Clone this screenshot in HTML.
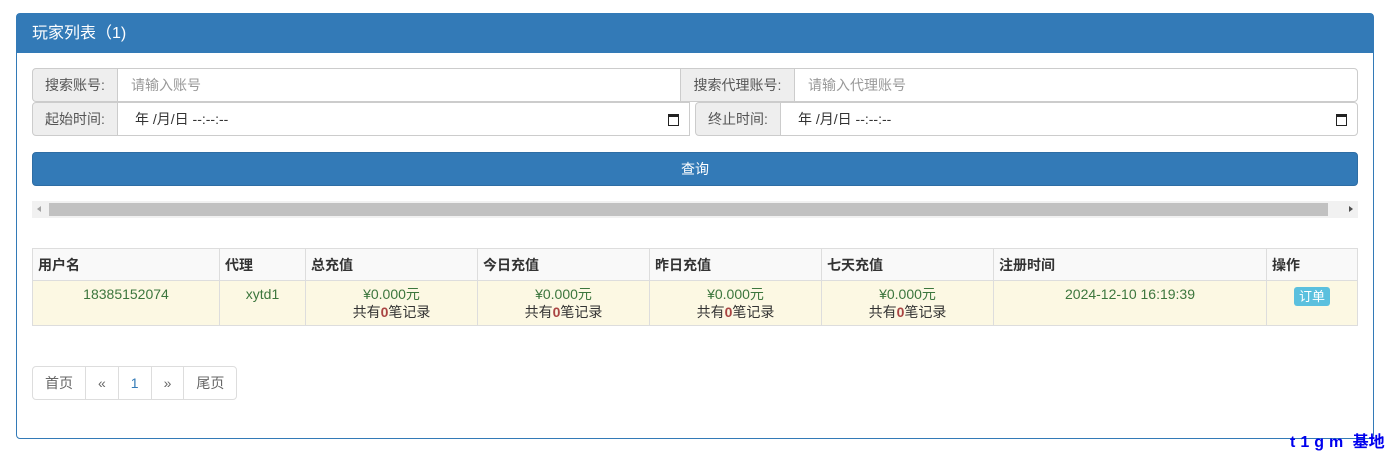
<!DOCTYPE html>
<html><head><meta charset="utf-8"><style>
*{box-sizing:border-box;margin:0;padding:0}
body{width:1390px;height:452px;background:#fff;font-family:"Liberation Sans","Noto Sans CJK SC",sans-serif;font-size:14px;color:#333;position:relative;overflow:hidden}
.panel{position:absolute;left:16px;top:13px;width:1358px;height:426px;border:1px solid #337ab7;border-radius:4px}
.ph{height:39px;background:#337ab7;color:#fff;font-size:16px;padding:10px 15px;line-height:19px}
.ab{position:absolute;height:34px;border:1px solid #ccc;line-height:32px;font-size:14px}
.add{background:#eee;color:#555;text-align:center;border-radius:4px 0 0 4px}
.inp{background:#fff;color:#999;padding-left:13px}
.dt{color:#333;padding-left:17px}
.cal{position:absolute;right:10px;top:11px;width:11px;height:12px;border:1.5px solid #222;border-top-width:3px}
.btn{position:absolute;left:32px;top:152px;width:1326px;height:34px;background:#337ab7;border:1px solid #2e6da4;border-radius:4px;color:#fff;text-align:center;line-height:32px}
.sb{position:absolute;left:32px;top:201px;width:1326px;height:17px;background:#f1f1f1}
.sb i{position:absolute;left:17px;top:2px;width:1279px;height:13px;background:#c1c1c1}
.sb b{position:absolute;top:5px;width:0;height:0;border-top:3.5px solid transparent;border-bottom:3.5px solid transparent}
table{position:absolute;left:32px;top:248px;width:1326px;border-collapse:collapse}
td,th{border:1px solid #ddd;padding:0 5px}
th{background:#f9f9f9;height:32px;text-align:left;font-weight:bold;font-size:14px}
td{background:#fcf8e3;height:45px;vertical-align:top;text-align:center;padding-top:4px;line-height:18px}
.g{color:#3c763d}.r{color:#a94442;font-weight:bold}
.lbl{display:inline-block;background:#5bc0de;color:#fff;font-size:13px;padding:1px 5px;border-radius:3px;margin-top:2px;line-height:17px}
.pg{position:absolute;left:32px;top:366px;display:flex}
.pg span{height:34px;border:1px solid #ddd;margin-left:-1px;padding:0 12px;line-height:32px;color:#666}
.wm{position:absolute;left:1290px;top:428px;color:#0000ee;font-weight:bold;font-size:16px;white-space:nowrap}
.wm span{letter-spacing:5px}
</style></head><body>
<div class="panel"><div class="ph">玩家列表（1)</div></div>
<div class="ab add" style="left:32px;top:68px;width:86px">搜索账号:</div>
<div class="ab inp" style="left:117px;top:68px;width:564px">请输入账号</div>
<div class="ab add" style="left:680px;top:68px;width:115px;border-radius:0">搜索代理账号:</div>
<div class="ab inp" style="left:794px;top:68px;width:564px;border-radius:0 4px 4px 0">请输入代理账号</div>
<div class="ab add" style="left:32px;top:102px;width:86px">起始时间:</div>
<div class="ab inp dt" style="left:117px;top:102px;width:573px">年 /月/日 --:--:--<i class="cal"></i></div>
<div class="ab add" style="left:695px;top:102px;width:86px">终止时间:</div>
<div class="ab inp dt" style="left:780px;top:102px;width:578px;border-radius:0 4px 4px 0">年 /月/日 --:--:--<i class="cal"></i></div>
<div class="btn">查询</div>
<div class="sb"><b style="left:5px;border-right:4px solid #a3a3a3"></b><i></i><b style="right:5px;border-left:4px solid #505050"></b></div>
<table>
<tr><th style="width:187px">用户名</th><th style="width:86px">代理</th><th style="width:172px">总充值</th><th style="width:172px">今日充值</th><th style="width:172px">昨日充值</th><th style="width:172px">七天充值</th><th style="width:273px">注册时间</th><th>操作</th></tr>
<tr><td class="g">18385152074</td><td class="g">xytd1</td>
<td><span class="g">¥0.000元</span><br>共有<span class="r">0</span>笔记录</td>
<td><span class="g">¥0.000元</span><br>共有<span class="r">0</span>笔记录</td>
<td><span class="g">¥0.000元</span><br>共有<span class="r">0</span>笔记录</td>
<td><span class="g">¥0.000元</span><br>共有<span class="r">0</span>笔记录</td>
<td class="g">2024-12-10 16:19:39</td><td><span class="lbl">订单</span></td></tr>
</table>
<div class="pg"><span style="margin-left:0;border-radius:4px 0 0 4px">首页</span><span>«</span><span style="color:#337ab7">1</span><span>»</span><span style="border-radius:0 4px 4px 0">尾页</span></div>
<div class="wm"><span>t1gm</span> 基地</div>
</body></html>
